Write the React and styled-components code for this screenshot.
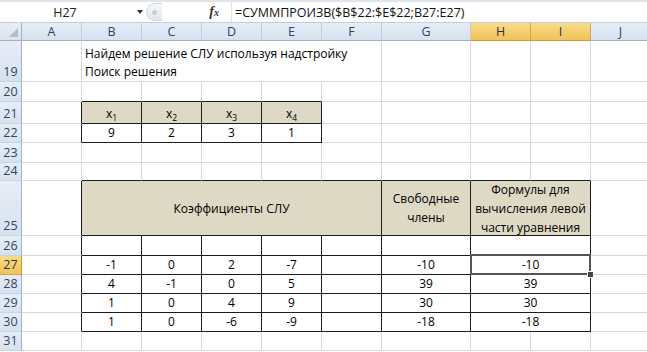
import React from 'react'
import styled, { createGlobalStyle, css } from 'styled-components'

const GlobalStyle = createGlobalStyle`
  html, body { margin: 0; padding: 0; background: #fff; }
  body { font-family: "Open Sans", "Liberation Sans", sans-serif; }
`

const GRID = '#d5d9de'
const INK = '#1c1c1c'
const TAN = '#ddd9c4'

const COLS = [
  { id: 'A', w: 60 },
  { id: 'B', w: 60 },
  { id: 'C', w: 60 },
  { id: 'D', w: 60 },
  { id: 'E', w: 60 },
  { id: 'F', w: 60 },
  { id: 'G', w: 89 },
  { id: 'H', w: 60, active: true },
  { id: 'I', w: 60, active: true },
  { id: 'J', w: 60 },
]

const ROWS = [
  { n: 19, h: 41 },
  { n: 20, h: 20 },
  { n: 21, h: 22 },
  { n: 22, h: 19 },
  { n: 23, h: 20 },
  { n: 24, h: 18 },
  { n: 25, h: 55 },
  { n: 26, h: 20 },
  { n: 27, h: 19, active: true },
  { n: 28, h: 19 },
  { n: 29, h: 19 },
  { n: 30, h: 19 },
  { n: 31, h: 19 },
]

// column index: A=0, B=1 ...
const TABLES = [
  { r0: 21, r1: 22, c0: 1, c1: 4 },
  { r0: 25, r1: 30, c0: 1, c1: 8 },
]

const inTable = (r, c) =>
  TABLES.some(t => r >= t.r0 && r <= t.r1 && c >= t.c0 && c <= t.c1)

const X = ({ i }) => (
  <span>
    x<Sub>{i}</Sub>
  </span>
)

const CELLS = {
  '19:1': {
    span: 5,
    text: 'Найдем решение СЛУ используя надстройку\nПоиск решения',
    align: 'left',
    wrap: true,
  },
  '21:1': { fill: TAN, text: <X i={1} /> },
  '21:2': { fill: TAN, text: <X i={2} /> },
  '21:3': { fill: TAN, text: <X i={3} /> },
  '21:4': { fill: TAN, text: <X i={4} /> },
  '22:1': { text: '9' },
  '22:2': { text: '2' },
  '22:3': { text: '3' },
  '22:4': { text: '1' },
  '25:1': { span: 5, fill: TAN, text: 'Коэффициенты СЛУ', middle: true },
  '25:6': { fill: TAN, text: 'Свободные\nчлены', middle: true, wrap: true },
  '25:7': {
    span: 2,
    fill: TAN,
    text: 'Формулы для\nвычисления левой\nчасти уравнения',
    middle: true,
    wrap: true,
  },
}

const DATA = {
  27: ['-1', '0', '2', '-7', '', '-10', '-10'],
  28: ['4', '-1', '0', '5', '', '39', '39'],
  29: ['1', '0', '4', '9', '', '30', '30'],
  30: ['1', '0', '-6', '-9', '', '-18', '-18'],
}

Object.entries(DATA).forEach(([r, vals]) => {
  vals.forEach((v, i) => {
    const c = i + 1
    CELLS[`${r}:${c}`] = c === 7 ? { span: 2, text: v, selected: r === '27' } : { text: v }
  })
})
CELLS['26:7'] = { span: 2 }

const Window = styled.div`
  width: 647px;
  height: 352px;
  overflow: hidden;
  background: #fff;
  display: flex;
  flex-direction: column;
`

const FormulaBar = styled.div`
  height: 20px;
  flex: none;
  display: flex;
  align-items: stretch;
  border-top: 2px solid #dfe5ee;
  border-bottom: 1px solid #c3cedb;
  background: #fff;
`

const NameBox = styled.div`
  width: 146px;
  flex: none;
  display: flex;
  align-items: center;
  font-size: 12.5px;
  color: #222;
`

const NameText = styled.span`
  width: 130px;
  text-align: center;
`

const DropArrow = styled.span`
  width: 0;
  height: 0;
  border-left: 3px solid transparent;
  border-right: 3px solid transparent;
  border-top: 4px solid #333;
  margin-left: 7px;
`

const Handle = styled.div`
  width: 16px;
  flex: none;
  margin: 1px 0;
  border-radius: 9px 0 0 9px;
  border: 1px solid #cfd6df;
  border-right: none;
  background: linear-gradient(#f7f8fa, #e3e7ec);
  display: flex;
  align-items: center;
  padding-left: 5px;
  box-sizing: border-box;

  &::after {
    content: '';
    width: 5px;
    height: 5px;
    border-radius: 50%;
    background: #c9cfd7;
  }
`

const FxArea = styled.div`
  width: 70px;
  flex: none;
  display: flex;
  align-items: center;
  justify-content: flex-end;
  padding-right: 12px;
  box-sizing: border-box;
  border-right: 1px solid #e1e5ea;
`

const Fx = styled.span`
  font-family: "Liberation Serif", serif;
  font-style: italic;
  font-weight: bold;
  font-size: 14px;
  color: #333;

  small {
    font-size: 10px;
  }
`

const FormulaText = styled.div`
  flex: 1;
  display: flex;
  align-items: center;
  padding-left: 3px;
  font-size: 12.5px;
  color: #111;
  white-space: nowrap;
`

const Sheet = styled.div`
  display: grid;
  grid-template-columns: ${p => p.$cols};
  grid-template-rows: ${p => p.$rows};
  font-size: 12px;
  color: #000;
`

const headerBg = css`
  background: ${p =>
    p.$active
      ? 'linear-gradient(#f9dc87, #f1c25b)'
      : 'linear-gradient(#e6edf7, #d7e1ee)'};
  color: ${p => (p.$active ? '#2c3543' : '#2f4467')};
`

const Corner = styled.div`
  box-sizing: border-box;
  background: linear-gradient(#e9eef5, #dbe3ee);
  border-right: 1px solid #9eb2cb;
  border-bottom: 1px solid #9eb2cb;
  position: relative;

  &::after {
    content: '';
    position: absolute;
    right: 3px;
    bottom: 3px;
    border-left: 9px solid transparent;
    border-bottom: 9px solid #b4bcc7;
  }
`

const ColHead = styled.div`
  box-sizing: border-box;
  ${headerBg};
  border-right: 1px solid ${p => (p.$active ? '#d6a84a' : '#c1cedf')};
  border-bottom: 1px solid ${p => (p.$active ? '#c49a3d' : '#9eb2cb')};
  display: flex;
  align-items: center;
  justify-content: center;
  font-size: 12.5px;
`

const RowHead = styled.div`
  box-sizing: border-box;
  ${headerBg};
  border-right: 1px solid ${p => (p.$active ? '#c49a3d' : '#9eb2cb')};
  border-bottom: 1px solid ${p => (p.$active ? '#d6a84a' : '#c9d5e5')};
  display: flex;
  align-items: flex-end;
  justify-content: center;
  font-size: 12.5px;
  line-height: 18px;
`

const Cell = styled.div`
  box-sizing: border-box;
  grid-column: span ${p => p.$span};
  background: ${p => p.$fill || '#fff'};
  border-right: 1px solid ${p => (p.$rInk ? INK : GRID)};
  border-bottom: 1px solid ${p => (p.$bInk ? INK : GRID)};
  display: flex;
  flex-direction: column;
  justify-content: ${p => (p.$middle ? 'center' : 'flex-end')};
  text-align: ${p => p.$align};
  padding: 0 3px;
  line-height: ${p => (p.$middle ? '19px' : '18px')};
  white-space: ${p => (p.$wrap ? 'pre' : 'nowrap')};
  position: relative;

  ${p =>
    p.$selected &&
    css`
      &::after {
        content: '';
        position: absolute;
        inset: -2px -1px -1px -1px;
        border: 2px solid #555;
      }
      &::before {
        content: '';
        position: absolute;
        right: -4px;
        bottom: -4px;
        width: 5px;
        height: 5px;
        background: #444;
        border: 1px solid #fff;
        z-index: 2;
      }
    `}
`

const Sub = styled.sub`
  font-size: 8.5px;
  vertical-align: -3px;
  line-height: 0;
`

function buildRow(row) {
  const out = []
  const r = row.n
  for (let c = 0; c < COLS.length; ) {
    const def = CELLS[`${r}:${c}`] || {}
    const span = def.span || 1
    const last = c + span - 1
    const rInk = inTable(r, c) || inTable(r, last + 1)
    let bInk = false
    for (let k = c; k <= last; k++) if (inTable(r, k) || inTable(r + 1, k)) bInk = true
    out.push(
      <Cell
        key={`${r}-${c}`}
        $span={span}
        $fill={def.fill}
        $rInk={rInk}
        $bInk={bInk}
        $middle={def.middle}
        $wrap={def.wrap}
        $align={def.align || 'center'}
        $selected={def.selected}
      >
        <div>{def.text}</div>
      </Cell>
    )
    c += span
  }
  return out
}

export default function App() {
  const cols = '22px ' + COLS.map(c => `${c.w}px`).join(' ')
  const rows = '18px ' + ROWS.map(r => `${r.h}px`).join(' ')

  return (
    <Window>
      <GlobalStyle />
      <FormulaBar>
        <NameBox>
          <NameText>H27</NameText>
          <DropArrow />
        </NameBox>
        <Handle />
        <FxArea>
          <Fx>
            f<small>x</small>
          </Fx>
        </FxArea>
        <FormulaText>=СУММПРОИЗВ($B$22:$E$22;B27:E27)</FormulaText>
      </FormulaBar>
      <Sheet $cols={cols} $rows={rows}>
        <Corner />
        {COLS.map(c => (
          <ColHead key={c.id} $active={c.active}>
            {c.id}
          </ColHead>
        ))}
        {ROWS.map(row => (
          <React.Fragment key={row.n}>
            <RowHead $active={row.active}>{row.n}</RowHead>
            {buildRow(row)}
          </React.Fragment>
        ))}
      </Sheet>
    </Window>
  )
}
